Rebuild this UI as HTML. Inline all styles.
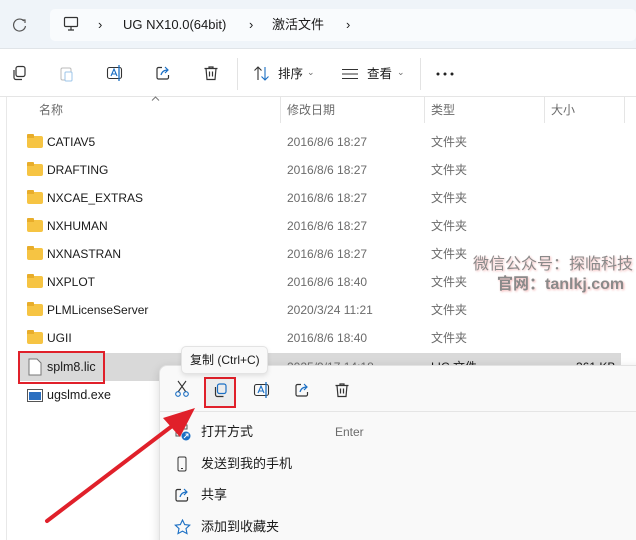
<!DOCTYPE html>
<html style="width:636px;height:540px;overflow:hidden"><head><meta charset="utf-8"><style>
*{margin:0;padding:0;box-sizing:border-box}
body{width:636px;height:540px;overflow:hidden;background:#fff;font-family:"Liberation Sans","Noto Sans CJK SC",sans-serif;font-size:12px;color:#1a1a1a;position:relative}
.a{position:absolute}
.top{left:0;top:0;width:636px;height:49px;background:#eff4f9;border-bottom:1px solid #e0e4e8}
.addr{left:50px;top:9px;width:586px;height:32px;background:#f9fbfd;border-radius:5px}
.t{position:absolute;white-space:nowrap;line-height:16px;height:16px}
.row{position:absolute;left:18px;width:603px;height:28px}
.row .t{top:6px}
.fold{position:absolute;left:9px;top:8px;width:16px;height:12px;background:#f6c443;border-radius:2px}
.fold:before{content:"";position:absolute;left:0;top:-2px;width:7px;height:4px;background:#e8ad2a;border-radius:1px 1px 0 0}
.g{color:#6b6b6b}
.mi{position:absolute;left:201px;font-size:13px;line-height:16px}
</style></head><body>
<div class="a top"></div>
<svg class="a" style="left:12px;top:17px" width="16" height="16"><path d="M12 4a6 6 0 1 0 1.5 5" stroke="#555" fill="none" stroke-width="1.2"/><path d="M10 3h3v3" stroke="#555" fill="none" stroke-width="1.2"/></svg>
<div class="a addr"></div>
<svg class="a" style="left:63px;top:16px" width="16" height="16"><rect x="1.5" y="1.5" width="13" height="9" rx="1" stroke="#333" fill="none" stroke-width="1.2"/><path d="M5 14h6M8 11v3" stroke="#333" stroke-width="1.2"/></svg>
<div class="t" style="left:98px;top:17px;font-size:13px">›</div>
<div class="t" style="left:123px;top:17px;font-size:13px">UG NX10.0(64bit)</div>
<div class="t" style="left:249px;top:17px;font-size:13px">›</div>
<div class="t" style="left:272px;top:17px;font-size:13px">激活文件</div>
<div class="t" style="left:346px;top:17px;font-size:13px">›</div>
<!-- toolbar -->
<svg class="a" style="left:11px;top:65px" width="16" height="16"><rect x="5" y="1.5" width="9" height="10" rx="2" stroke="#333" fill="none" stroke-width="1.2"/><path d="M3 5v7.5a2 2 0 0 0 2 2h6" stroke="#333" fill="none" stroke-width="1.2"/></svg>
<svg class="a" style="left:59px;top:65px" width="16" height="17"><rect x="2" y="3" width="10" height="12" rx="1.5" stroke="#bbb" fill="none"/><rect x="6" y="7" width="7" height="9" rx="1" stroke="#9cc5ea" fill="#fff"/></svg>
<svg class="a" style="left:106px;top:64px" width="18" height="18"><rect x="1.5" y="3.5" width="14" height="11" rx="2" stroke="#333" fill="none" stroke-width="1.1"/><path d="M5 12l3-7 3 7M6 10h4" stroke="#1b6fc4" fill="none" stroke-width="1.1"/><path d="M13 1v16" stroke="#1b6fc4" stroke-width="1.3"/></svg>
<svg class="a" style="left:155px;top:65px" width="16" height="16"><path d="M7 2.5H3.5a1.5 1.5 0 0 0-1.5 1.5v8.5a1.5 1.5 0 0 0 1.5 1.5h8.5a1.5 1.5 0 0 0 1.5-1.5V10" stroke="#333" fill="none" stroke-width="1.2"/><path d="M6 10c1-4 4-5 7-5M10 2l3 3-3 3" stroke="#1b6fc4" fill="none" stroke-width="1.2"/></svg>
<svg class="a" style="left:203px;top:65px" width="16" height="16"><path d="M1.5 3.5h13M6 3.5V2h4v1.5M3 3.5l1 11h8l1-11M6.5 6.5v5M9.5 6.5v5" stroke="#333" fill="none" stroke-width="1.2"/></svg>
<div class="a" style="left:237px;top:58px;width:1px;height:32px;background:#e3e3e3"></div>
<svg class="a" style="left:253px;top:66px" width="18" height="15"><path d="M5 14V1M1.5 4.5L5 1l3.5 3.5" stroke="#333" fill="none" stroke-width="1.1"/><path d="M12 1v13M8.5 10.5L12 14l3.5-3.5" stroke="#1b6fc4" fill="none" stroke-width="1.1"/></svg>
<div class="t" style="left:278px;top:66px;font-size:12.5px">排序</div>
<div class="t g" style="left:307px;top:64px;font-size:9px">⌄</div>
<svg class="a" style="left:342px;top:68px" width="16" height="12"><path d="M0 1.5h16M0 6h16M0 10.5h16" stroke="#333" stroke-width="1.1"/></svg>
<div class="t" style="left:367px;top:66px;font-size:12.5px">查看</div>
<div class="t g" style="left:397px;top:64px;font-size:9px">⌄</div>
<div class="a" style="left:420px;top:58px;width:1px;height:32px;background:#e3e3e3"></div>
<svg class="a" style="left:436px;top:72px" width="20" height="4"><circle cx="2" cy="2" r="1.5" fill="#222"/><circle cx="9" cy="2" r="1.5" fill="#222"/><circle cx="16" cy="2" r="1.5" fill="#222"/></svg>
<div class="a" style="left:0;top:96px;width:636px;height:1px;background:#e5e5e5"></div>
<div class="a" style="left:6px;top:97px;width:1px;height:443px;background:#e8e8e8"></div>
<!-- header -->
<svg class="a" style="left:151px;top:96px" width="9" height="5"><path d="M1 4.5L4.5 1 8 4.5" stroke="#777" fill="none"/></svg>
<div class="t g" style="left:39px;top:102px">名称</div>
<div class="a" style="left:280px;top:97px;width:1px;height:26px;background:#e5e5e5"></div>
<div class="t g" style="left:287px;top:102px">修改日期</div>
<div class="a" style="left:424px;top:97px;width:1px;height:26px;background:#e5e5e5"></div>
<div class="t g" style="left:431px;top:102px">类型</div>
<div class="a" style="left:544px;top:97px;width:1px;height:26px;background:#e5e5e5"></div>
<div class="t g" style="left:551px;top:102px">大小</div>
<div class="a" style="left:624px;top:97px;width:1px;height:26px;background:#e5e5e5"></div>
<!-- rows -->
<div class="row" style="top:128px"><div class="fold"></div><span class="t" style="left:29px">CATIAV5</span><span class="t g" style="left:269px">2016/8/6 18:27</span><span class="t g" style="left:413px">文件夹</span></div>
<div class="row" style="top:156px"><div class="fold"></div><span class="t" style="left:29px">DRAFTING</span><span class="t g" style="left:269px">2016/8/6 18:27</span><span class="t g" style="left:413px">文件夹</span></div>
<div class="row" style="top:184px"><div class="fold"></div><span class="t" style="left:29px">NXCAE_EXTRAS</span><span class="t g" style="left:269px">2016/8/6 18:27</span><span class="t g" style="left:413px">文件夹</span></div>
<div class="row" style="top:212px"><div class="fold"></div><span class="t" style="left:29px">NXHUMAN</span><span class="t g" style="left:269px">2016/8/6 18:27</span><span class="t g" style="left:413px">文件夹</span></div>
<div class="row" style="top:240px"><div class="fold"></div><span class="t" style="left:29px">NXNASTRAN</span><span class="t g" style="left:269px">2016/8/6 18:27</span><span class="t g" style="left:413px">文件夹</span></div>
<div class="row" style="top:268px"><div class="fold"></div><span class="t" style="left:29px">NXPLOT</span><span class="t g" style="left:269px">2016/8/6 18:40</span><span class="t g" style="left:413px">文件夹</span></div>
<div class="row" style="top:296px"><div class="fold"></div><span class="t" style="left:29px">PLMLicenseServer</span><span class="t g" style="left:269px">2020/3/24 11:21</span><span class="t g" style="left:413px">文件夹</span></div>
<div class="row" style="top:324px"><div class="fold"></div><span class="t" style="left:29px">UGII</span><span class="t g" style="left:269px">2016/8/6 18:40</span><span class="t g" style="left:413px">文件夹</span></div>
<div class="row" style="top:353px;background:#d9d9d9"><svg class="a" style="left:10px;top:5px" width="14" height="18"><path d="M1 1h8l4 4v12H1z" fill="#fff" stroke="#777"/></svg><span class="t" style="left:29px;font-size:12.5px">splm8.lic</span><span class="t g" style="left:269px">2025/9/17 14:18</span><span class="t" style="left:413px">LIC 文件</span><span class="t" style="left:558px">361 KB</span></div>
<div class="row" style="top:381px"><svg class="a" style="left:9px;top:8px" width="16" height="13"><rect x=".5" y=".5" width="15" height="12" fill="#fff" stroke="#555"/><rect x="2" y="3" width="12" height="8" fill="#2b6fc0"/></svg><span class="t" style="left:29px;font-size:12.5px">ugslmd.exe</span><span class="t g" style="left:413px">应用程序</span><span class="t g" style="left:548px">1,138 KB</span></div>
<div class="a" style="left:18px;top:351px;width:87px;height:33px;border:2px solid #e0202a"></div>
<!-- watermark -->
<div class="t" style="left:473px;top:256px;font-size:16px;line-height:18px;height:18px;color:#8a8a8a;text-shadow:1px 1px 2px #f3b6b6">微信公众号：探临科技</div>
<div class="t" style="left:497px;top:276px;font-size:16px;line-height:18px;height:18px;color:#8a8a8a;font-weight:bold;text-shadow:1px 1px 2px #f3b6b6">官网：tanlkj.com</div>
<!-- context menu -->
<div class="a" style="left:159px;top:365px;width:490px;height:190px;background:#f9f9f9;border:1px solid #e2e2e2;border-radius:8px;box-shadow:0 3px 10px rgba(0,0,0,.15)"></div>
<div class="a" style="left:160px;top:411px;width:476px;height:1px;background:#e5e5e5"></div>
<svg class="a" style="left:174px;top:380px" width="16" height="17"><path d="M4 1l8 11M12 1L4 12" stroke="#333" stroke-width="1.1"/><circle cx="4" cy="14" r="2.3" fill="none" stroke="#1b6fc4" stroke-width="1.1"/><circle cx="12" cy="14" r="2.3" fill="none" stroke="#1b6fc4" stroke-width="1.1"/></svg>
<div class="a" style="left:204px;top:377px;width:32px;height:31px;background:#ececec;border:2px solid #e0202a"></div>
<svg class="a" style="left:213px;top:383px" width="15" height="15"><rect x="4.5" y="1" width="8.5" height="9.5" rx="2" stroke="#1b6fc4" fill="none" stroke-width="1.2"/><path d="M2.5 4v7.5a2 2 0 0 0 2 2h6" stroke="#333" fill="none" stroke-width="1.2"/></svg>
<svg class="a" style="left:253px;top:381px" width="18" height="18"><rect x="1.5" y="3.5" width="14" height="11" rx="2" stroke="#333" fill="none" stroke-width="1.1"/><path d="M5 12l3-7 3 7M6 10h4" stroke="#1b6fc4" fill="none" stroke-width="1.1"/><path d="M13 1v16" stroke="#1b6fc4" stroke-width="1.3"/></svg>
<svg class="a" style="left:294px;top:382px" width="16" height="16"><path d="M7 2.5H3.5a1.5 1.5 0 0 0-1.5 1.5v8.5a1.5 1.5 0 0 0 1.5 1.5h8.5a1.5 1.5 0 0 0 1.5-1.5V10" stroke="#333" fill="none" stroke-width="1.2"/><path d="M6 10c1-4 4-5 7-5M10 2l3 3-3 3" stroke="#1b6fc4" fill="none" stroke-width="1.2"/></svg>
<svg class="a" style="left:334px;top:382px" width="16" height="16"><path d="M1.5 3.5h13M6 3.5V2h4v1.5M3 3.5l1 11h8l1-11M6.5 6.5v5M9.5 6.5v5" stroke="#333" fill="none" stroke-width="1.2"/></svg>
<div class="a" style="left:181px;top:346px;width:87px;height:28px;background:#f9f9f9;border:1px solid #e3e3e3;border-radius:5px;box-shadow:0 2px 5px rgba(0,0,0,.1)"></div>
<div class="t" style="left:190px;top:352px">复制 (Ctrl+C)</div>
<svg class="a" style="left:175px;top:424px" width="16" height="17"><rect x="1" y="1" width="4" height="4" fill="none" stroke="#555"/><rect x="8" y="1" width="4" height="4" fill="none" stroke="#555"/><rect x="1" y="8" width="4" height="4" fill="none" stroke="#555"/><circle cx="11" cy="12" r="4.5" fill="#1b6fc4"/><path d="M9 14l4-4M10.5 10H13v2.5" stroke="#fff" fill="none"/></svg>
<div class="mi" style="top:424px">打开方式</div>
<div class="t g" style="left:335px;top:424px">Enter</div>
<svg class="a" style="left:176px;top:456px" width="12" height="17"><rect x="2" y="1" width="8" height="14" rx="1.5" fill="none" stroke="#333"/><path d="M5 12.5h2" stroke="#333"/></svg>
<div class="mi" style="top:456px">发送到我的手机</div>
<svg class="a" style="left:174px;top:487px" width="16" height="16"><path d="M7 2.5H3.5a1.5 1.5 0 0 0-1.5 1.5v8.5a1.5 1.5 0 0 0 1.5 1.5h8.5a1.5 1.5 0 0 0 1.5-1.5V10" stroke="#333" fill="none" stroke-width="1.2"/><path d="M6 10c1-4 4-5 7-5M10 2l3 3-3 3" stroke="#1b6fc4" fill="none" stroke-width="1.2"/></svg>
<div class="mi" style="top:487px">共享</div>
<svg class="a" style="left:174px;top:519px" width="17" height="17"><path d="M8.5 1l2.2 4.6 5 .6-3.7 3.4 1 5-4.5-2.5-4.5 2.5 1-5L1.3 6.2l5-.6z" fill="none" stroke="#1b6fc4" stroke-width="1.1"/></svg>
<div class="mi" style="top:519px">添加到收藏夹</div>
<!-- arrow -->
<svg class="a" style="left:0;top:0" width="636" height="540"><path d="M47 521L180 420" stroke="#e0202a" stroke-width="4" stroke-linecap="round"/><path d="M195 408L163 418L180 437Z" fill="#e0202a"/></svg>
</body></html>
